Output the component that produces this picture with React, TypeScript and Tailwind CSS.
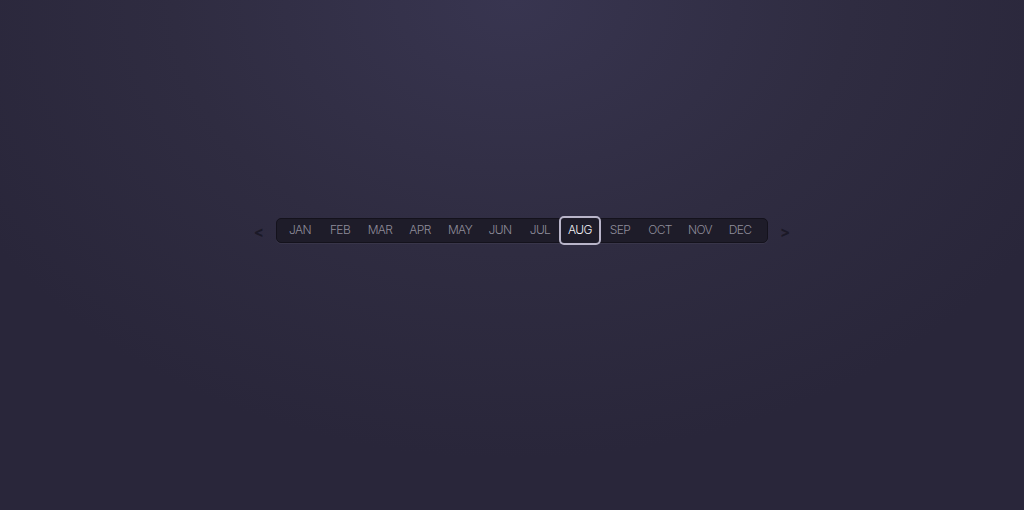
const MONTHS = [
  "JAN",
  "FEB",
  "MAR",
  "APR",
  "MAY",
  "JUN",
  "JUL",
  "AUG",
  "SEP",
  "OCT",
  "NOV",
  "DEC",
];

export default function App() {
  const active = "AUG";

  return (
    <div className="flex h-[510px] w-full items-center justify-center bg-[radial-gradient(ellipse_60%_90%_at_50%_0%,#383550_0%,#2f2c41_55%,#29263a_100%)] font-['Inter','Liberation_Sans',sans-serif]">
      <div className="-mt-[50px] ml-[20px] flex items-center gap-[12px]">
        <button className="pt-[3px] text-[15px] font-bold leading-none text-[#1b1927]">
          &lt;
        </button>

        <div className="flex h-[25px] items-center rounded-[5px] border border-[#14121c] bg-[#1e1c29] pl-[3px] pr-[7px] shadow-[0_1px_0_rgba(255,255,255,0.05)]">
          {MONTHS.map((m) => (
            <div key={m} className="relative flex h-full w-[40px] items-center justify-center">
              {m === active && (
                <div className="absolute -inset-x-[1px] -inset-y-[3px] rounded-[5px] border-2 border-[#b9b5c9] bg-[#1e1c29]" />
              )}
              <span
                className={`relative text-[12px] font-light tracking-[-0.05em] ${
                  m === active ? "text-[#f2f1f7]" : "text-[#8e8c9a]"
                }`}
              >
                {m}
              </span>
            </div>
          ))}
        </div>

        <button className="pt-[3px] text-[15px] font-bold leading-none text-[#1b1927]">
          &gt;
        </button>
      </div>
    </div>
  );
}
